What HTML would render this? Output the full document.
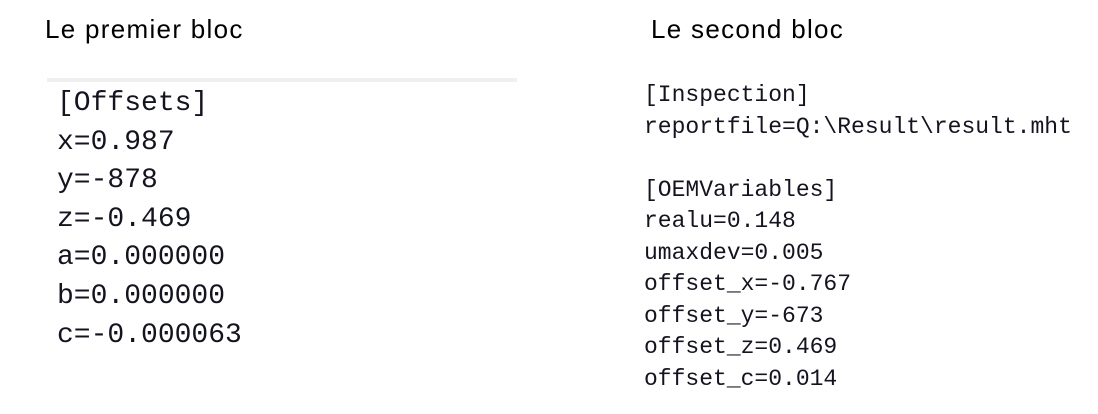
<!DOCTYPE html>
<html><head><style>
body{margin:0;width:1098px;height:414px;background:#fff;position:relative;overflow:hidden;font-family:"Liberation Sans",sans-serif;color:#000}
.h{position:absolute;font-size:26px;top:14px;letter-spacing:1.3px}
.bar{position:absolute;left:47px;top:78px;width:470px;height:4px;background:#f0f0f0}
pre{position:absolute;margin:0;font-family:"Liberation Mono",monospace;color:#141420}
#a{left:57px;top:85px;font-size:28px;line-height:38.6px}
#b{left:644px;top:80px;font-size:23px;line-height:31.5px}
</style></head><body>
<div class="h" style="left:45px">Le premier bloc</div>
<div class="h" style="left:651px">Le second bloc</div>
<div class="bar"></div>
<pre id="a">[Offsets]
x=0.987
y=-878
z=-0.469
a=0.000000
b=0.000000
c=-0.000063</pre>
<pre id="b">[Inspection]
reportfile=Q:\Result\result.mht

[OEMVariables]
realu=0.148
umaxdev=0.005
offset_x=-0.767
offset_y=-673
offset_z=0.469
offset_c=0.014</pre>
</body></html>
